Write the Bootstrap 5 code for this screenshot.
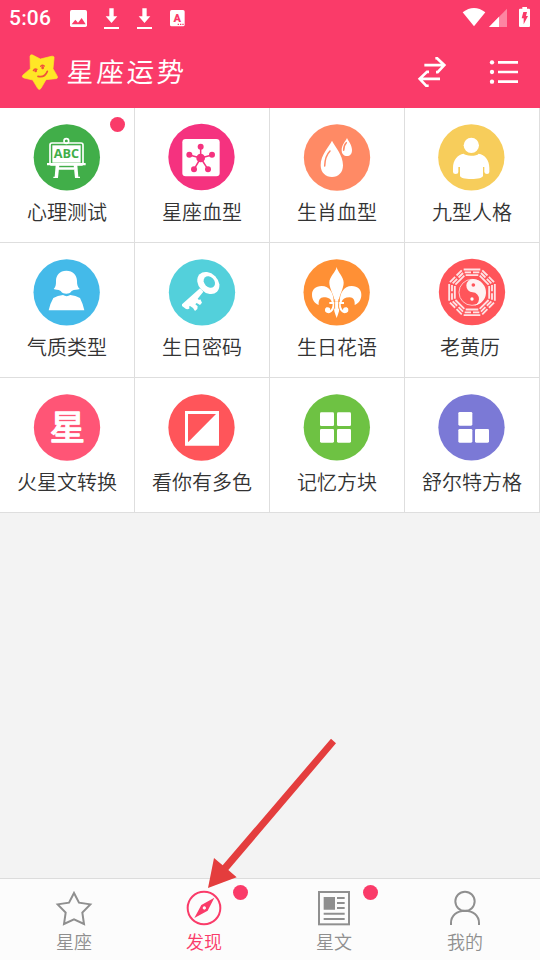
<!DOCTYPE html>
<html lang="zh-CN">
<head>
<meta charset="utf-8">
<meta name="viewport" content="width=device-width, initial-scale=1">
<title>星座运势</title>
<link href="https://cdn.jsdelivr.net/npm/bootstrap@5.3.0/dist/css/bootstrap.min.css" rel="stylesheet">
<style>
  body { background: #f3f3f3; font-family: "Noto Sans CJK SC", sans-serif; height: 960px; overflow: hidden; }
  svg { display: block; flex: none; }
  .top-area { background: #fa3b69; height: 108px; color: #fff; }
  .status-row { height: 36px; padding-left: 9px; }
  .clock { font: 500 21px/38px Roboto, sans-serif; width: 58px; letter-spacing: .2px; }
  .title-row { height: 72px; padding: 0 21px; }
  .brand-name { font-size: 27px; line-height: 40px; letter-spacing: 3px; font-weight: 400; margin-left: 8px; margin-top: -2px; transform: skewX(-4deg); }
  .menu-icon { margin-left: 42px; }
  .tile { width: 135px; height: 135px; background: #fff; border-right: 1px solid #dedede; border-bottom: 1px solid #dedede; padding-top: 15px; }
  .tile-label { font-size: 20px; line-height: 30px; font-weight: 350; color: #333; margin-top: 6px; white-space: nowrap; }
  .dot { position: absolute; width: 15px; height: 15px; border-radius: 50%; background: #fa3b69; }
  .tile .dot { left: 110px; top: 9px; }
  .tab-item .dot { left: 93.5px; top: 6px; }
  .tabs { height: 82px; background: #fcfcfc; border-top: 1px solid #dcdcdc; padding: 0 11px 0 9px; }
  .tab-item { width: 130px; padding-top: 9px; color: #8f8f8f; text-decoration: none; }
  .tab-item.current { color: #fa3b69; }
  .tab-label { font-size: 18px; line-height: 26px; font-weight: 350; }
  .tab-item:last-child .tab-label { padding-left: 2px; }
  .pointer-arrow { position: absolute; left: 190px; top: 730px; pointer-events: none; }
</style>
<script src="https://cdn.jsdelivr.net/npm/bootstrap@5.3.0/dist/js/bootstrap.bundle.min.js"></script>
</head>
<body class="d-flex flex-column position-relative">
<header class="top-area">
  <div class="status-row d-flex align-items-center">
    <div class="clock">5:06</div>
    <svg width="122" height="36" viewBox="201 0 366 108">
      <rect x="210" y="30" width="51" height="51" rx="5" fill="#fff"/>
      <path d="M215 73l11-14 8 9 11-14 12 19z" fill="#fa3b69"/>
      <g fill="#fff">
        <path id="dl" d="M328 25h13v24h11l-17.500 20-17.500-20h11zM312 81h45v6h-45z"/>
        <use href="#dl" x="99"/>
        <rect x="510" y="30" width="44" height="49" rx="5"/>
      </g>
      <text x="532" y="66" text-anchor="middle" font-family="Roboto, sans-serif" font-weight="900" font-size="33" fill="#fa3b69">A</text>
      <path d="M533 73h4m3 0h4m3 0h4" stroke="#fa3b69" stroke-width="4"/>
    </svg>
    <svg class="ms-auto" width="80" height="36" viewBox="570 0 240 108">
      <path d="M578 37q34-26 68 0l-34 42z" fill="#fff"/>
      <path d="M711 26v55h-54z" fill="#fd85a2"/>
      <path d="M687 50v31h-30z" fill="#fff"/>
      <path d="M757 21h14v5h6q3 0 3 3v49q0 3-3 3h-27q-3 0-3-3V29q0-3 3-3h7z" fill="#fff"/>
      <path d="M760 36h11l-3 12h6l-13 25v-18h-6z" fill="#fa3b69"/>
    </svg>
  </div>
  <div class="title-row d-flex align-items-center">
    <svg width="38" height="38" viewBox="62 158 114 114">
      <path d="M89 168q1-7 8-4l23 12 33-8q10-2 8 7l-3 30 12 21q5 8-4 9l-29 3-15 26q-5 7-10 0l-15-25-26-6q-9-3-3-9l22-19z" fill="#ffe626" stroke="#ffe626" stroke-width="2" stroke-linejoin="round"/>
      <g fill="none" stroke="#f0503c" stroke-linecap="round">
        <path d="M113 228q20 5 28-15" stroke-width="5"/>
        <path d="M99 211q3-7 11-4M121 198q4-6 11-1" stroke-width="4"/>
      </g>
      <g fill="#f0503c"><ellipse cx="106" cy="211" rx="4" ry="5"/><ellipse cx="127" cy="202" rx="4" ry="5"/></g>
    </svg>
    <div class="brand-name">星座运势</div>
    <svg class="ms-auto" width="30" height="30" viewBox="441 171 90 90">
      <path d="M463 195.500h57M496 174.500h5l22 21-20 21h-5M510 236.500h-57M477 215.500h-6l-22 21 20 21h7" fill="none" stroke="#fff" stroke-width="8"/>
    </svg>
    <svg class="menu-icon" width="30" height="30" viewBox="657 171 90 90">
      <g fill="#fff"><circle cx="666" cy="187" r="6.500"/><circle cx="666" cy="216" r="6.500"/><circle cx="666" cy="245" r="6.500"/>
      <path d="M684 183h60v8h-60zM684 212h60v8h-60zM684 241h60v8h-60z"/></g>
    </svg>
  </div>
</header>

<main class="flex-grow-1">
  <div class="d-flex flex-wrap">
    <div class="tile position-relative d-flex flex-column align-items-center">
      <svg width="68" height="68" viewBox="99 45 204 204"><circle cx="200.500" cy="148" r="99.500" fill="#41ae49"/>
        <g fill="none" stroke="#fff"><circle cx="199" cy="99" r="7" stroke-width="5"/><rect x="150" y="105" width="99" height="66" rx="6" stroke-width="5"/></g>
        <rect x="157" y="112" width="85" height="52" fill="#fff"/>
        <path d="M141 165h116v7H141zM176 178h46v7h-46zM167 172h11l-4 38h-14v-4h4zM221 172h11l3 34h5v4h-15z" fill="#fff"/>
        <text x="199.500" y="151" text-anchor="middle" font-family="Open Sans, sans-serif" font-size="39" font-weight="700" textLength="76" lengthAdjust="spacingAndGlyphs" fill="#41ae49">ABC</text>
      </svg>
      <span class="dot"></span><div class="tile-label">心理测试</div>
    </div>
    <div class="tile d-flex flex-column align-items-center">
      <svg width="68" height="68" viewBox="504 45 204 204"><circle cx="604.500" cy="147" r="99.500" fill="#f5327f"/>
        <rect x="547" y="93" width="112" height="112" rx="10" fill="#fff"/>
        <path d="M602 150v-34M602 150l-34-9M602 150l34-9M602 150l-20 34M602 150l22 34" stroke="#f5327f" stroke-width="4.500"/>
        <g fill="#f5327f"><circle cx="602" cy="150" r="13"/><circle cx="602" cy="116" r="9"/><circle cx="568" cy="140" r="9"/><circle cx="636" cy="140" r="9"/><circle cx="582" cy="184" r="9"/><circle cx="624" cy="184" r="9"/></g>
      </svg><div class="tile-label">星座血型</div>
    </div>
    <div class="tile d-flex flex-column align-items-center">
      <svg width="68" height="68" viewBox="99 45 204 204"><circle cx="201" cy="148.500" r="99.500" fill="#ff8a65"/>
        <path d="M186 98c8 17 33 42 33 74 0 22-14 35-33 35s-34-13-34-35c0-32 26-57 34-74zM231 90c4 9 15 21 15 36 0 12-6 18-15 18s-16-6-16-18c0-15 12-27 16-36z" fill="#fff"/>
        <path d="M164 174q1-30 16-45M221 127q0-15 8-23" fill="none" stroke="#ff8a65" stroke-width="4.500" stroke-linecap="round"/>
      </svg><div class="tile-label">生肖血型</div>
    </div>
    <div class="tile d-flex flex-column align-items-center">
      <svg width="68" height="68" viewBox="504 45 204 204"><circle cx="604" cy="148" r="99.500" fill="#f7cd5b"/>
        <circle cx="604" cy="112" r="23" fill="#fff"/>
        <path d="M581 137q5 5 22 6 18 0 23-6c18 3 32 19 32 43v12q0 6-7 6t-8-6v-15h-4v26c0 6-16 10-35 10s-34-4-34-10v-26h-5v15q0 6-8 6t-8-6v-12c0-24 14-40 32-43z" fill="#fff"/>
      </svg><div class="tile-label">九型人格</div>
    </div>
    <div class="tile d-flex flex-column align-items-center">
      <svg width="68" height="68" viewBox="99 45 204 204"><circle cx="200" cy="148" r="99.500" fill="#44bae9"/>
        <path d="M199 83c20 0 32 14 32 30 0 11 1 17 8 25-8 3-15 1-24 6-5 7-10 8-16 8s-12-1-17-8c-8-5-15-3-21-6 7-8 7-14 7-25 0-16 11-30 31-30z" fill="#fff"/>
        <path d="M160 165q13-7 29-9 11 7 22 0 16 2 29 9 8 15 13 37H146q5-22 14-37z" fill="#fff"/>
      </svg><div class="tile-label">气质类型</div>
    </div>
    <div class="tile d-flex flex-column align-items-center">
      <svg width="68" height="68" viewBox="504 45 204 204"><circle cx="606" cy="148" r="99.500" fill="#53d0db"/>
        <ellipse cx="625" cy="120" rx="37" ry="29" transform="rotate(45 625 120)" fill="#fff"/>
        <ellipse cx="628" cy="117" rx="19" ry="15" transform="rotate(45 628 117)" fill="#53d0db"/>
        <path d="M600 136l10 10-17 21 4 4 4-2 5 10-6 7-10-6-4 4 7 6-1 8-7 6-6-9-9-6-3 2 2 5-5 3-6-1-12-9v-5z" fill="#fff"/>
      </svg><div class="tile-label">生日密码</div>
    </div>
    <div class="tile d-flex flex-column align-items-center">
      <svg width="68" height="68" viewBox="99 45 204 204"><circle cx="200" cy="148" r="99.500" fill="#ff9035"/>
        <g fill="#fff">
          <path d="M200 72c3 15 21 30 21 47 0 18-14 38-15 57h-12c-1-19-16-39-16-57 0-17 19-32 22-47zM195 183h10c0 9 4 13 2 22q-3 10-7 20-4-10-7-20c-2-9 2-13 2-22z"/>
          <path id="leaf" d="M191 177c0-27-12-48-36-48-19 0-29 11-29 26 0 14 7 25 20 31-1-14 4-23 15-23 14 0 22 5 24 14z"/>
          <use href="#leaf" transform="matrix(-1 0 0 1 400 0)"/>
          <path d="M178 177h44v6h-44z"/>
        </g>
        <g fill="none" stroke="#fff" stroke-width="6">
          <path id="curl" d="M191 181c0 14-5 23-13 26-8 2-12-7-6-12"/><use href="#curl" transform="matrix(-1 0 0 1 400 0)"/>
        </g>
        <circle cx="173" cy="201" r="8" fill="#fff"/><circle cx="227" cy="201" r="8" fill="#fff"/>
        <path d="M194 169v28M206 169v28" stroke="#ff9035" stroke-width="2.500"/>
      </svg><div class="tile-label">生日花语</div>
    </div>
    <div class="tile d-flex flex-column align-items-center">
      <svg width="68" height="68" viewBox="504 45 204 204"><circle cx="606" cy="147" r="99.500" fill="#ff555a"/>
        <g fill="none" stroke="#ffe3e5" stroke-width="5.500" transform="translate(606 148)">
          <path id="triA" d="M-25-68.500h50M-22-60h19m6 0h19M-19-51.500h38"/>
          <g transform="rotate(45)"><path id="triB" d="M-25-68.500h22m6 0h22M-22-60h19m6 0h19M-19-51.500h38"/></g>
          <use href="#triA" transform="rotate(90)"/>
          <use href="#triB" transform="rotate(135)"/>
          <use href="#triA" transform="rotate(180)"/>
          <use href="#triB" transform="rotate(225)"/>
          <use href="#triA" transform="rotate(270)"/>
          <use href="#triB" transform="rotate(315)"/>
        </g>
        <circle cx="606" cy="148" r="39" fill="none" stroke="#ffdfe1" stroke-width="2.500"/>
        <path d="M610 108a40 40 0 0 1-4 80 20 20 0 0 0 2-40 20 20 0 0 1 2-40z" fill="#fff2f3"/>
        <circle cx="610" cy="126" r="5.500" fill="#ff555a"/><circle cx="606" cy="168" r="5" fill="#fff"/>
      </svg><div class="tile-label pe-1">老黄历</div>
    </div>
    <div class="tile d-flex flex-column align-items-center">
      <svg width="68" height="68" viewBox="99 45 204 204"><circle cx="201" cy="148.500" r="99.500" fill="#ff5576"/>
        <text x="202" y="186" text-anchor="middle" font-family="Noto Sans CJK SC, sans-serif" font-size="106" font-weight="400" fill="#fff" stroke="#fff" stroke-width="4" stroke-linejoin="round">星</text>
      </svg><div class="tile-label">火星文转换</div>
    </div>
    <div class="tile d-flex flex-column align-items-center">
      <svg width="68" height="68" viewBox="504 45 204 204"><circle cx="604.500" cy="148.500" r="99.500" fill="#ff555a"/>
        <path fill-rule="evenodd" d="M555 99h102v104H555zM564 108v85l84-85z" fill="#fff"/>
      </svg><div class="tile-label">看你有多色</div>
    </div>
    <div class="tile d-flex flex-column align-items-center">
      <svg width="68" height="68" viewBox="99 45 204 204"><circle cx="200.500" cy="148" r="99.500" fill="#6ec243"/>
        <g fill="#fff"><rect x="150" y="103" width="42" height="41" rx="4"/><rect x="201" y="103" width="42" height="41" rx="4"/><rect x="150" y="153" width="42" height="41" rx="4"/><rect x="201" y="153" width="42" height="41" rx="4"/></g>
      </svg><div class="tile-label">记忆方块</div>
    </div>
    <div class="tile d-flex flex-column align-items-center">
      <svg width="68" height="68" viewBox="504 45 204 204"><circle cx="604.500" cy="148" r="99.500" fill="#7b79d6"/>
        <g fill="#fff"><rect x="565" y="102" width="42" height="41" rx="4"/><rect x="565" y="153" width="42" height="41" rx="4"/><rect x="615" y="153" width="42" height="41" rx="4"/></g>
      </svg><div class="tile-label">舒尔特方格</div>
    </div>
  </div>
</main>

<nav class="tabs d-flex">
  <a class="tab-item position-relative d-flex flex-column align-items-center">
    <svg width="40" height="40" viewBox="162 54 120 120"><path d="M222 69l15 29 34 5-24 25 5 34-30-14-30 14 5-34-24-25 34-5z" fill="none" stroke="currentColor" stroke-width="6"/></svg>
    <span class="tab-label">星座</span>
  </a>
  <a class="tab-item current position-relative d-flex flex-column align-items-center">
    <svg width="40" height="40" viewBox="552 54 120 120"><circle cx="612" cy="114" r="49" fill="none" stroke="currentColor" stroke-width="6"/><path fill-rule="evenodd" d="M643 83l-20 39-40 22 21-39zM613 109a5 5 0 1 0 .1 0z" fill="currentColor"/></svg>
    <span class="dot"></span><span class="tab-label">发现</span>
  </a>
  <a class="tab-item position-relative d-flex flex-column align-items-center">
    <svg width="40" height="40" viewBox="132 54 120 120"><rect x="147" y="66" width="90" height="97" fill="none" stroke="currentColor" stroke-width="6"/><path d="M161 81h34v38h-34zM201 81h23v6h-23zM201 96h23v6h-23zM201 111h23v6h-23zM161 128h63v6h-63zM161 144h63v6h-63z" fill="currentColor"/></svg>
    <span class="dot"></span><span class="tab-label">星文</span>
  </a>
  <a class="tab-item position-relative d-flex flex-column align-items-center">
    <svg width="40" height="40" viewBox="522 54 120 120"><g fill="none" stroke="currentColor" stroke-width="6"><circle cx="585" cy="94" r="29"/><path d="M543 165v-6c0-22 18-37 42-37s42 15 42 37v6"/></g></svg>
    <span class="tab-label">我的</span>
  </a>
</nav>

<svg class="pointer-arrow" width="160" height="170" viewBox="0 0 480 510"><path d="M423 26l15 14L115 420l25 22-86 32 18-90 26 22z" fill="#e43d3d"/></svg>
</body>
</html>
